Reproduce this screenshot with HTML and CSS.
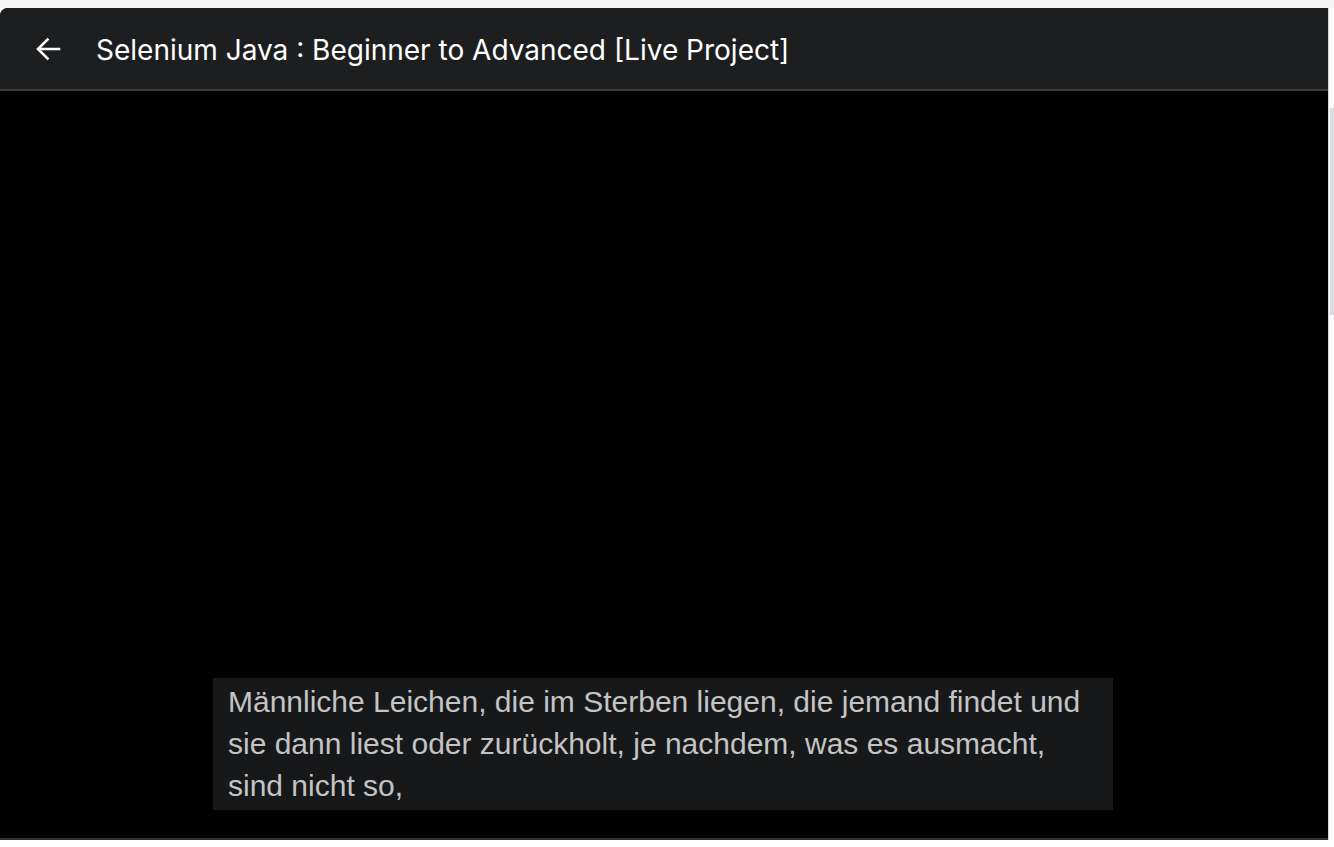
FILE: index.html
```html
<!DOCTYPE html>
<html lang="de">
<head>
<meta charset="utf-8">
<title>Selenium Java : Beginner to Advanced [Live Project]</title>
<link rel="stylesheet" href="styles.css">
</head>
<body>
<div class="top-strip"></div>
<div class="layout">
  <section class="player">
    <header class="player-header">
      <button class="back-btn" aria-label="Zurück">
        <svg width="28" height="28" viewBox="0 0 28 28" aria-hidden="true">
          <path d="M25 14H4.5M13.5 4.5L4 14l9.5 9.5" fill="none" stroke="#ffffff" stroke-width="2.6" stroke-linecap="square" stroke-linejoin="miter"/>
        </svg>
      </button>
      <h1 class="course-title">Selenium Java : Beginner to Advanced [Live Project]</h1>
    </header>
    <div class="video">
      <div class="caption">Männliche Leichen, die im Sterben liegen, die jemand findet und sie dann liest oder zurückholt, je nachdem, was es ausmacht, sind nicht so,</div>
    </div>
  </section>
  <aside class="scroll-track"><div class="scroll-thumb"></div></aside>
</div>
</body>
</html>
```

FILE: styles.css
```css
html, body {
  margin: 0;
  padding: 0;
  background: #ffffff;
  height: 100%;
}

body {
  font-family: "Inter", "Liberation Sans", sans-serif;
  overflow: hidden;
}

.top-strip {
  height: 8px;
  background: #f5f5f5;
}

.layout {
  display: flex;
  align-items: stretch;
}

.player {
  width: 1328px;
  display: flex;
  flex-direction: column;
  background: #000000;
  border-top-left-radius: 8px;
  overflow: hidden;
}

.player-header {
  height: 83px;
  box-sizing: border-box;
  background: #1d1e20;
  border-bottom: 2px solid #3a3c3e;
  display: flex;
  align-items: center;
  padding-left: 34px;
  gap: 34px;
}

.back-btn {
  background: none;
  border: 0;
  padding: 0;
  width: 28px;
  height: 28px;
  display: flex;
  align-items: center;
  justify-content: center;
  cursor: pointer;
}

.course-title {
  margin: 0;
  color: #ffffff;
  font-family: "Inter", "Liberation Sans", sans-serif;
  font-size: 28px;
  font-weight: 400;
  letter-spacing: 0;
  padding-top: 2px;
}

.video {
  height: 749px;
  display: flex;
  justify-content: center;
  align-items: flex-end;
  padding-bottom: 28px;
  box-sizing: border-box;
  border-bottom: 2px solid #2e3032;
}

.caption {
  width: 900px;
  box-sizing: border-box;
  background: #17181a;
  color: #c4c4c4;
  font-family: "Liberation Sans", Arial, sans-serif;
  font-size: 30px;
  line-height: 42px;
  padding: 3px 16px 3px 15px;
  margin-right: 2px;
}

.scroll-track {
  width: 6px;
  border-left: 1px solid #d6d7da;
  background: #fafafa;
  padding-top: 100px;
  box-sizing: border-box;
}

.scroll-thumb {
  width: 4px;
  margin-left: 1px;
  height: 207px;
  background: #dadce0;
}
```
